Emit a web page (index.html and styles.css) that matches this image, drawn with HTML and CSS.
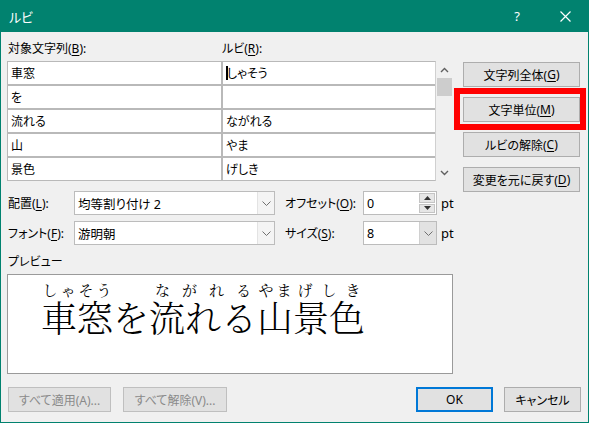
FILE: index.html
```html
<!DOCTYPE html>
<html lang="ja">
<head>
<meta charset="utf-8">
<title>ルビ</title>
<link rel="stylesheet" href="styles.css">
</head>
<body>
<div class="window">
  <div class="titlebar">
    <span class="title">ルビ</span>
    <span class="help">?</span>
    <span class="close"><svg width="11" height="11" viewBox="0 0 11 11"><path d="M0.5 0.5 L10.5 10.5 M10.5 0.5 L0.5 10.5" stroke="#fff" stroke-width="1.2" fill="none"/></svg></span>
  </div>
  <div class="main">
    <div class="left">
      <div class="heads">
        <span class="head1">対象文字列(<u>B</u>):</span>
        <span class="head2">ルビ(<u>R</u>):</span>
      </div>
      <div class="gridwrap">
        <div class="cells">
          <div class="cell">車窓</div><div class="cell"><span class="caret"></span>しゃそう</div>
          <div class="cell">を</div><div class="cell"></div>
          <div class="cell">流れる</div><div class="cell">ながれる</div>
          <div class="cell">山</div><div class="cell">やま</div>
          <div class="cell">景色</div><div class="cell">げしき</div>
        </div>
        <div class="scrollbar">
          <div class="sb-arrow"><svg width="9" height="6" viewBox="0 0 9 6"><path d="M1 5 L4.5 1.5 L8 5" stroke="#606060" stroke-width="1.4" fill="none"/></svg></div>
          <div class="sb-thumb"></div>
          <div class="sb-track"></div>
          <div class="sb-arrow"><svg width="9" height="6" viewBox="0 0 9 6"><path d="M1 1 L4.5 4.5 L8 1" stroke="#606060" stroke-width="1.4" fill="none"/></svg></div>
        </div>
      </div>
      <div class="form">
        <span class="flabel">配置(<u>L</u>):</span>
        <div class="combo"><span class="ctext">均等割り付け 2</span><span class="cbtn"><svg width="9" height="5" viewBox="0 0 9 5"><path d="M0.5 0.5 L4.5 4.5 L8.5 0.5" stroke="#707070" stroke-width="1" fill="none"/></svg></span></div>
        <span class="flabel flabel2">オフセット(<u>O</u>):</span>
        <div class="combo small"><span class="ctext">0</span><span class="spin"><span class="spbtn"><svg width="7" height="4" viewBox="0 0 7 4"><path d="M0 4 L3.5 0 L7 4 Z" fill="#333"/></svg></span><span class="spbtn"><svg width="7" height="4" viewBox="0 0 7 4"><path d="M0 0 L3.5 4 L7 0 Z" fill="#333"/></svg></span></span></div>
        <span class="unit">pt</span>

        <span class="flabel">フォント(<u>F</u>):</span>
        <div class="combo"><span class="ctext">游明朝</span><span class="cbtn"><svg width="9" height="5" viewBox="0 0 9 5"><path d="M0.5 0.5 L4.5 4.5 L8.5 0.5" stroke="#707070" stroke-width="1" fill="none"/></svg></span></div>
        <span class="flabel flabel2">サイズ(<u>S</u>):</span>
        <div class="combo small"><span class="ctext">8</span><span class="cbtn dark"><svg width="9" height="5" viewBox="0 0 9 5"><path d="M0.5 0.5 L4.5 4.5 L8.5 0.5" stroke="#707070" stroke-width="1" fill="none"/></svg></span></div>
        <span class="unit">pt</span>
      </div>
      <div class="plabel">プレビュー</div>
      <div class="preview">
        <span class="grp"><span class="rt"><span>し</span><span>ゃ</span><span>そ</span><span>う</span></span><span class="rb">車窓</span></span><span class="grp"><span class="rt"></span><span class="rb">を</span></span><span class="grp"><span class="rt"><span>な</span><span>が</span><span>れ</span><span>る</span></span><span class="rb">流れる</span></span><span class="grp"><span class="rt"><span>や</span><span>ま</span></span><span class="rb">山</span></span><span class="grp"><span class="rt"><span>げ</span><span>し</span><span>き</span></span><span class="rb">景色</span></span>
      </div>
    </div>
    <div class="right">
      <button class="btn side">文字列全体(<u>G</u>)</button>
      <button class="btn side">文字単位(<u>M</u>)</button>
      <button class="btn side">ルビの解除(<u>C</u>)</button>
      <button class="btn side">変更を元に戻す(<u>D</u>)</button>
      <div class="highlight"></div>
    </div>
  </div>
  <div class="footer">
    <div class="fgroup">
      <button class="btn disabled w103">すべて適用(A)...</button>
      <button class="btn disabled w104">すべて解除(V)...</button>
    </div>
    <div class="fgroup">
      <button class="btn default w77">OK</button>
      <button class="btn w77">キャンセル</button>
    </div>
  </div>
</div>
</body>
</html>
```

FILE: styles.css
```css
* { box-sizing: border-box; }
html, body { margin: 0; padding: 0; }
body {
  width: 589px;
  height: 423px;
  font-family: "Noto Sans", "Noto Sans CJK JP", sans-serif;
  font-size: 12px;
  color: #000;
  background: #f0f0f0;
  font-feature-settings: "palt";
}
u { text-decoration: underline; text-underline-offset: 2px; }

.window {
  width: 589px;
  height: 423px;
  border: 1px solid #01826f;
  border-top: 0;
  background: #f0f0f0;
  display: flex;
  flex-direction: column;
}

.titlebar {
  height: 32px;
  margin: 0 -1px;
  background: #01826f;
  color: #fff;
  display: flex;
  align-items: center;
}
.title {
  font-family: "Noto Sans CJK JP", sans-serif;
  font-size: 13px;
  padding-left: 9px;
  flex: 1;
}
.help {
  font-family: "Noto Sans", sans-serif;
  font-size: 13px;
  width: 46px;
  text-align: center;
  margin-right: 2px;
}
.close {
  width: 46px;
  display: flex;
  justify-content: center;
  align-items: center;
  margin-right: 1px;
}

.main {
  display: flex;
  padding: 6px 7px 0 6px;
  column-gap: 10px;
}
.left { width: 446px; display: flex; flex-direction: column; }

.heads { height: 20px; display: flex; align-items: center; }
.head1 { width: 215px; padding-left: 1px; }

.gridwrap {
  margin-top: 3px;
  display: flex;
  height: 120px;
}
.cells {
  display: grid;
  grid-template-columns: 213px 212px;
  grid-auto-rows: 22px;
  gap: 2px;
  background: #b9b9b9;
  border: 1px solid #b9b9b9;
  border-right-color: #d0d0d0;
}
.cell {
  background: #fff;
  padding-left: 3px;
  line-height: 22px;
  font-family: "Noto Sans CJK JP", sans-serif;
  font-size: 12px;
  display: flex;
  align-items: center;
}
.caret {
  display: inline-block;
  width: 2px;
  height: 14px;
  background: #000;
  margin-right: -1px;
}
.scrollbar {
  width: 17px;
  background: #f0f0f0;
  display: flex;
  flex-direction: column;
}
.sb-arrow {
  height: 17px;
  display: flex;
  align-items: center;
  justify-content: center;
}
.sb-thumb {
  height: 18px;
  margin: 0 1px;
  background: #cdcdcd;
}
.sb-track { flex: 1; }

.form {
  margin-top: 10px;
  display: grid;
  grid-template-columns: 67px 201px 88px 74px auto;
  grid-auto-rows: 24px;
  row-gap: 6px;
  align-items: center;
}
.flabel { padding-left: 1px; white-space: nowrap; }
.flabel2 { padding-left: 10px; }
.unit { padding-left: 4px; font-size: 13px; }
.combo {
  height: 24px;
  background: #fff;
  border: 1px solid #bcbcbc;
  display: flex;
  align-items: center;
}
.ctext {
  flex: 1;
  padding-left: 3px;
  font-family: "Noto Sans", "Noto Sans CJK JP", sans-serif;
  font-size: 12.5px;
}
.cbtn {
  width: 17px;
  height: 100%;
  border-left: 1px solid #e3e3e3;
  background: #f4f4f4;
  display: flex;
  align-items: center;
  justify-content: center;
}
.cbtn.dark { background: #e2e2e2; border-left-color: #d0d0d0; }
.spin {
  width: 17px;
  height: 100%;
  display: flex;
  flex-direction: column;
  padding: 1px 1px 1px 0;
  gap: 1px;
}
.spbtn {
  flex: 1;
  background: #e6e6e6;
  border: 1px solid #c4c4c4;
  display: flex;
  align-items: center;
  justify-content: center;
}

.plabel {
  margin-top: 8px;
  height: 18px;
  line-height: 18px;
  padding-left: 1px;
}
.preview {
  margin-top: 3px;
  height: 100px;
  background: #fff;
  border: 1px solid #9a9a9a;
  padding: 6px 0 0 33px;
  display: flex;
  align-items: flex-start;
  font-family: "Noto Serif CJK JP", "Noto Sans CJK JP", serif;
  font-feature-settings: normal;
}
.grp { display: inline-flex; flex-direction: column; }
.rt {
  height: 18px;
  display: flex;
  justify-content: space-around;
  font-size: 15px;
  line-height: 18px;
  font-weight: 400;
}
.rb {
  font-size: 36px;
  line-height: 36px;
  font-weight: 300;
  white-space: nowrap;
}

.right {
  width: 117px;
  position: relative;
  padding-top: 24px;
  display: flex;
  flex-direction: column;
  gap: 10px;
}
.btn {
  height: 25px;
  background: #e1e1e1;
  border: 1px solid #adadad;
  font-family: "Noto Sans", "Noto Sans CJK JP", sans-serif;
  font-size: 12px;
  font-feature-settings: "palt";
  color: #000;
  padding: 0;
  display: flex;
  align-items: center;
  justify-content: center;
}
.side { width: 117px; }
.highlight {
  position: absolute;
  left: -9px;
  top: 50px;
  width: 132px;
  height: 42px;
  border: 6px solid #ff0000;
}

.footer {
  margin-top: 13px;
  display: flex;
  justify-content: space-between;
  padding: 0 7px;
}
.fgroup { display: flex; gap: 11px; }
.fgroup:first-child { gap: 12px; }
.disabled {
  color: #8a8a8a;
  background: #e1e1e1;
  border-color: #bfbfbf;
}
.w103 { width: 103px; }
.w104 { width: 104px; }
.w77 { width: 77px; }
.default { border: 2px solid #0078d7; }
```
